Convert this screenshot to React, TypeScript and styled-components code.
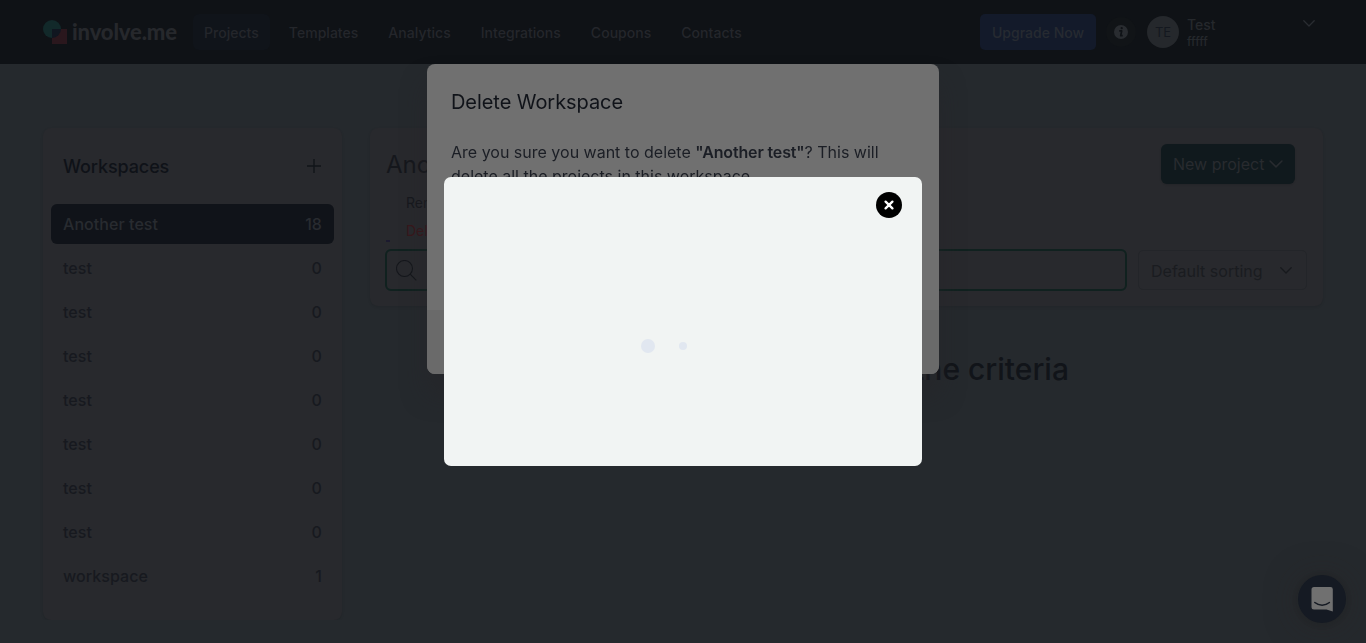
import React from "react";
import styled, { createGlobalStyle } from "styled-components";

const Global = createGlobalStyle`
  *, *::before, *::after { box-sizing: border-box; }
  body {
    margin: 0;
    background: #25292d;
    color: #17191f;
    font-family: Inter, "Liberation Sans", sans-serif;
    font-size: 16px;
    line-height: 24px;
    overflow: hidden;
  }
  button { font: inherit; border: 0; padding: 0; margin: 0; }
  h1, h2, h3, p, ul { margin: 0; padding: 0; font-weight: 400; }
  svg { display: block; flex: none; }
`;

const Header = styled.header`
  height: 64px;
  padding: 0 44px 0 43px;
  display: flex;
  align-items: center;
  background: #0f1216;
`;

const Logo = styled.div`
  display: flex;
  width: 150px;
  height: 28px;
  gap: 4px;
`;

const LogoText = styled.span`
  font-family: Lato, sans-serif;
  font-weight: 900;
  font-size: 22px;
  line-height: 28px;
  letter-spacing: -0.15px;
  color: #26282c;
`;

const Nav = styled.nav`
  display: flex;
  gap: 8px;
  flex: 1;
`;

const NavItem = styled.a<{ $active?: boolean }>`
  height: 36px;
  padding: 1px 11px 0;
  border-radius: 6px;
  font-size: 14px;
  line-height: 36px;
  font-weight: 500;
  letter-spacing: 0.03px;
  color: #24262b;
  background: ${(p) => (p.$active ? "#10141a" : "transparent")};
`;

const Upgrade = styled.button`
  width: 116px;
  height: 36px;
  padding-top: 2px;
  border-radius: 5px;
  background: #131a2a;
  color: #262a31;
  font-size: 14px;
  font-weight: 500;
  letter-spacing: 0.02px;
`;

const InfoButton = styled.button`
  width: 30px;
  height: 30px;
  margin: 0 11px 0 10px;
  border-radius: 50%;
  background: #111417;
  display: grid;
  place-items: center;
`;

const Avatar = styled.div`
  width: 32px;
  height: 32px;
  border-radius: 50%;
  background: #25282c;
  color: #14181f;
  font-size: 13px;
  line-height: 33px;
  text-align: center;
`;

const Account = styled.div`
  width: 116px;
  margin-left: 8px;
  padding-top: 2px;
  font-size: 14px;
  font-weight: 500;
  line-height: 18px;
  color: #25282c;
  & > small { display: block; font-size: 12px; line-height: 16px; }
`;

const AccountChevron = styled.div`
  margin: -17px 7px 0 0;
`;

const Layout = styled.main`
  padding: 64px 43px 0;
  display: grid;
  grid-template-columns: 299px 953px;
  column-gap: 28px;
  align-items: start;
`;

const Card = styled.section`
  background: #28292d;
  border-radius: 8px;
  box-shadow: 0 1px 3px rgba(0, 0, 0, 0.1);
`;

const Sidebar = styled(Card)`
  height: 492px;
  padding: 26px 8px 0;
`;

const SidebarHead = styled.div`
  height: 50px;
  padding: 0 12px;
  display: flex;
  justify-content: space-between;
  align-items: flex-start;
  & > h2 {
    font-size: 18px;
    line-height: 26px;
    font-weight: 500;
    letter-spacing: -0.1px;
    color: #0f1218;
  }
  & > svg { margin-top: 4px; }
`;

const WorkspaceList = styled.ul`
  display: flex;
  flex-direction: column;
  gap: 4px;
  list-style: none;
`;

const Workspace = styled.li<{ $selected?: boolean }>`
  height: 40px;
  padding: 0 12px;
  display: flex;
  justify-content: space-between;
  align-items: center;
  border-radius: 6px;
  font-weight: ${(p) => (p.$selected ? 500 : 450)};
  letter-spacing: 0.06px;
  color: ${(p) => (p.$selected ? "#282b30" : "#17191f")};
  background: ${(p) => (p.$selected ? "#101319" : "transparent")};
`;

const Panel = styled(Card)`
  height: 178px;
  padding: 16px;
`;

const PanelHead = styled.div`
  height: 56px;
  padding-right: 12px;
  display: flex;
  justify-content: space-between;
  align-items: flex-start;
  & > h1 {
    font-size: 24px;
    line-height: 42px;
    color: #15171c;
  }
`;

const NewProject = styled.button`
  width: 134px;
  height: 40px;
  padding: 0 12px;
  display: flex;
  align-items: center;
  justify-content: space-between;
  border-radius: 6px;
  background: #10191d;
  color: #282b2f;
  white-space: nowrap;
  box-shadow: 0 1px 2px rgba(0, 0, 0, 0.12);
`;

const Actions = styled.div`
  height: 49px;
  padding: 1px 0 0 20px;
  font-size: 14px;
  line-height: 28px;
  margin-top: -12px;
  margin-bottom: 12px;
`;

const Action = styled.div<{ $danger?: boolean }>`
  color: ${(p) => (p.$danger ? "#38171b" : "#16181d")};
`;

const DashMark = styled.div`
  width: 4px;
  height: 2px;
  margin: -5px 0 0 -20px;
  background: #1c1a2f;
`;

const Filters = styled.div`
  display: flex;
  align-items: center;
  gap: 11px;
  margin-left: -1px;
`;

const Search = styled.div`
  width: 742px;
  height: 42px;
  flex: none;
  padding-left: 9px;
  display: flex;
  align-items: center;
  border: 2px solid #10211f;
  border-radius: 6px;
`;

const Sort = styled.div`
  width: 169px;
  height: 40px;
  flex: none;
  padding: 2px 14px 0 12px;
  display: flex;
  align-items: center;
  justify-content: space-between;
  border: 1px solid #232529;
  border-radius: 5px;
  color: #1a1c20;
  & > svg { margin-top: -2px; }
`;

const Empty = styled.h2`
  margin-top: 43px;
  padding-left: 20px;
  font-size: 30px;
  line-height: 40px;
  font-weight: 450;
  text-align: center;
  color: #111419;
`;

const DialogLayer = styled.div`
  position: fixed;
  inset: 64px 0 auto;
  display: flex;
  justify-content: center;
`;

const Dialog = styled.section`
  width: 512px;
  height: 310px;
  display: flex;
  flex-direction: column;
  border-radius: 8px;
  overflow: hidden;
  background: #707070;
  color: #1b1e25;
  box-shadow: 0 20px 25px rgba(38, 36, 40, 0.5);
`;

const DialogBody = styled.div`
  flex: 1;
  padding: 24px 24px 0;
  & > h2 {
    font-size: 20px;
    line-height: 28px;
    letter-spacing: -0.06px;
    color: #101319;
    margin-bottom: 24px;
  }
  & > p > b { font-weight: 600; letter-spacing: -0.15px; }
`;

const DialogFooter = styled.footer`
  height: 64px;
  background: #6a6a6a;
`;

const LoaderLayer = styled.div`
  position: fixed;
  inset: 0;
  display: flex;
  align-items: center;
  justify-content: center;
`;

const Loader = styled.section`
  width: 478px;
  height: 289px;
  padding: 15px 20px;
  border-radius: 7px;
  background: #f1f4f3;
`;

const Close = styled.button`
  display: grid;
  place-items: center;
  width: 26px;
  height: 26px;
  margin-left: auto;
  border-radius: 50%;
  background: #000;
`;

const Dots = styled.div`
  display: flex;
  align-items: center;
  gap: 24px;
  margin: 121px 0 0 177px;
`;

const Dot = styled.i<{ $size: number }>`
  width: ${(p) => p.$size}px;
  height: ${(p) => p.$size}px;
  border-radius: 50%;
  background: #e1e7f0;
`;

const Chat = styled.button`
  position: fixed;
  right: 20px;
  bottom: 20px;
  width: 48px;
  height: 48px;
  display: grid;
  place-items: center;
  border-radius: 50%;
  background: #151a23;
  box-shadow: 0 1px 6px rgba(15, 17, 20, 0.15), 0 2px 32px rgba(40, 36, 36, 0.5);
`;

const Chevron = ({ color, width = 12 }: { color: string; width?: number }) => (
  <svg width={width} height={width / 2 + 1} viewBox="0 0 12 7" fill="none" stroke={color} strokeWidth="1.3" strokeLinecap="round" strokeLinejoin="round">
    <path d="M.8.8 6 6 11.2.8" />
  </svg>
);

const navItems = ["Projects", "Templates", "Analytics", "Integrations", "Coupons", "Contacts"];

const workspaces: [string, number][] = [
  ["Another test", 18],
  ["test", 0],
  ["test", 0],
  ["test", 0],
  ["test", 0],
  ["test", 0],
  ["test", 0],
  ["test", 0],
  ["workspace", 1],
];

export default function App() {
  return (
    <>
      <Global />
      <Header>
        <Logo>
          <svg width="25" height="26" viewBox="0 0 25 26">
            <circle cx="9" cy="11" r="9" fill="#12292a" />
            <path d="M9 11h15v15H9z" fill="#2a171d" />
            <path d="M9 11h9a9 9 0 0 1-9 9z" fill="#101620" />
          </svg>
          <LogoText>involve.me</LogoText>
        </Logo>
        <Nav>
          {navItems.map((item, i) => (
            <NavItem key={item} $active={i === 0}>{item}</NavItem>
          ))}
        </Nav>
        <Upgrade>Upgrade Now</Upgrade>
        <InfoButton aria-label="Info">
          <svg width="14" height="14" viewBox="0 0 14 14">
            <circle cx="7" cy="7" r="7" fill="#292c30" />
            <path d="M5.200 5.900h2.500L6.700 10.700h2" fill="none" stroke="#0f1216" strokeWidth="1.700" strokeLinejoin="round" />
            <circle cx="7.700" cy="3.200" r="1.150" fill="#0f1216" />
          </svg>
        </InfoButton>
        <Avatar>TE</Avatar>
        <Account>
          Test
          <small>fffff</small>
        </Account>
        <AccountChevron><Chevron color="#292c31" /></AccountChevron>
      </Header>
      <Layout>
        <Sidebar>
          <SidebarHead>
            <h2>Workspaces</h2>
            <svg width="16" height="16" viewBox="0 0 16 16" stroke="#111419" strokeWidth="1.4">
              <path d="M8 1v14M1 8h14" />
            </svg>
          </SidebarHead>
          <WorkspaceList>
            {workspaces.map(([name, count], i) => (
              <Workspace key={i} $selected={i === 0}>
                <span>{name}</span>
                <span>{count}</span>
              </Workspace>
            ))}
          </WorkspaceList>
        </Sidebar>
        <div>
          <Panel>
            <PanelHead>
              <h1>Another test</h1>
              <NewProject>
                New project
                <Chevron color="#282b2f" width={14} />
              </NewProject>
            </PanelHead>
            <Actions>
              <Action>Rename</Action>
              <Action $danger>Delete</Action>
              <DashMark />
            </Actions>
            <Filters>
              <Search>
                <svg width="21" height="21" viewBox="0 0 21 21" fill="none" stroke="#15171c" strokeWidth="1.1">
                  <circle cx="8.5" cy="8.5" r="8" />
                  <path d="m14.2 14.2 6.1 6.1" />
                </svg>
              </Search>
              <Sort>
                Default sorting
                <Chevron color="#17191d" />
              </Sort>
            </Filters>
          </Panel>
          <Empty>No projects match the criteria</Empty>
        </div>
      </Layout>
      <DialogLayer>
        <Dialog>
          <DialogBody>
            <h2>Delete Workspace</h2>
            <p>Are you sure you want to delete <b>"Another test"</b>? This will delete all the projects in this workspace.</p>
          </DialogBody>
          <DialogFooter />
        </Dialog>
      </DialogLayer>
      <Chat aria-label="Chat">
        <svg width="22" height="25" viewBox="0 0 22 25">
          <path d="M3 0h16.500a2.300 2.300 0 0 1 2.300 2.300V24.500L15.500 22.400H3A2.500 2.500 0 0 1 .5 19.900V2.500A2.500 2.500 0 0 1 3 0z" fill="#707070" />
          <path d="M3.800 15.500c4.200 3.500 10.400 3.500 14.600 0" fill="none" stroke="#151a23" strokeWidth="1.500" strokeLinecap="round" />
        </svg>
      </Chat>
      <LoaderLayer>
        <Loader>
          <Close aria-label="Close">
            <svg width="10" height="10" viewBox="0 0 10 10" stroke="#fff" strokeWidth="2.300" strokeLinecap="round">
              <path d="m1.600 1.600 6.800 6.800M8.400 1.600 1.600 8.400" />
            </svg>
          </Close>
          <Dots>
            <Dot $size={14} />
            <Dot $size={8} />
          </Dots>
        </Loader>
      </LoaderLayer>
    </>
  );
}
